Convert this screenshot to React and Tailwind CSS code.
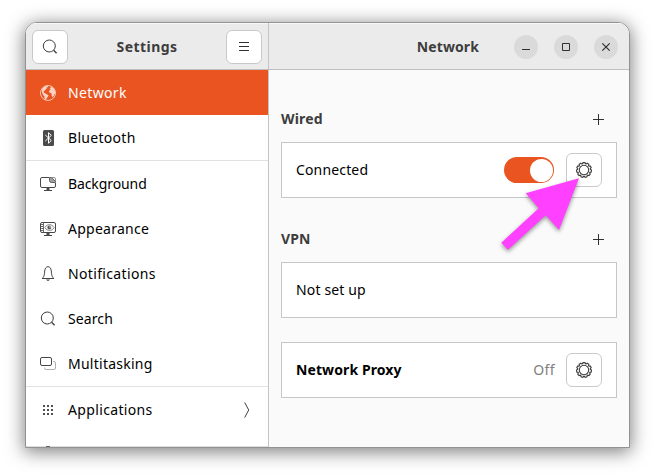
import React from "react";

function Globe() {
  return (
    <svg width="16" height="16" viewBox="0 0 16 16" className="text-[#fad3c5]">
      <circle cx="8" cy="8" r="7.500" fill="none" stroke="currentColor" strokeWidth=".9" />
      <path d="M1.800 4.500 3.300 2.200 5.500 1l2.300-.2.200 1.200-1.600.8.300 1-1.600 1.200-1.200 1.300-.2 1.500 1.500.2.600 1 1.700.4 1 1-.7 1.700-1.100.9-.5 1.800-.7.300-1-1.700-.2-2.100-1.200-1.300-.9-2.300z" fill="currentColor" />
      <path d="m9.500 3.600 1.300-.6-.3-1.200 1.300-.1 2 1.700 1.400 2.600.1 2.600-1 .6-.5 1.800-1.300 1-.7-.6-.1-2.100-.6-1.200-1.500-.4-.7-1.400.9-1.400 1.200-.2z" fill="currentColor" />
    </svg>
  );
}

function BluetoothIcon() {
  return (
    <svg width="16" height="16" viewBox="0 0 16 16">
      <rect x="3" y="0" width="11" height="16" rx="1.500" fill="#4b4b4b" />
      <path d="m5.300 5 6 5.500-2.800 2.700V2.700l2.800 2.700-6 5.600" fill="none" stroke="#fff" strokeWidth="1" />
    </svg>
  );
}

function BackgroundIcon() {
  return (
    <svg width="16" height="16" viewBox="0 0 16 16">
      <path d="M9 1.500H2A1.500 1.500 0 0 0 .5 3v7A1.500 1.500 0 0 0 2 11.500h12A1.500 1.500 0 0 0 15.500 10V7" fill="none" stroke="#484848" />
      <path d="M9.500 1.500h2L15.500 5.500v1h-4a2 2 0 0 1-2-2z" fill="#a0a0a0" stroke="#555" strokeWidth=".9" />
      <path d="M12 1.500h2A1.500 1.500 0 0 1 15.500 3v2" fill="none" stroke="#888" strokeWidth=".9" />
      <path d="M6.500 12h3v2h-3zM4 14h8v1H4z" fill="#484848" />
    </svg>
  );
}

function AppearanceIcon() {
  return (
    <svg width="16" height="16" viewBox="0 0 16 16">
      <rect x=".5" y="1.500" width="15" height="10" rx="1.500" fill="none" stroke="#484848" />
      <path d="M3.500 1.500v10M1 3.500h2M1 5.500h2M1 7.500h2M1 9.500h2" stroke="#5a5a5a" strokeWidth=".9" />
      <path d="M4.800 6.600C6.300 4.200 8 3.600 9.500 3.600s3.200.8 4.700 3c-1.500 2.200-3.200 2.900-4.700 2.900s-3.200-.7-4.700-2.900z" fill="none" stroke="#777" strokeWidth=".9" />
      <circle cx="9.300" cy="6.500" r="1.900" fill="#555" />
      <circle cx="10" cy="6" r=".7" fill="#fff" />
      <path d="M6.500 12h3v2h-3zM4 14h8v1H4z" fill="#484848" />
    </svg>
  );
}

function Bell() {
  return (
    <svg width="16" height="16" viewBox="0 0 16 16" fill="none" stroke="#454545">
      <path d="M2.500 12c1-1 1.700-2 2-4.500l.2-2.500C5 2.500 6 .7 8 .7S11 2.500 11.300 5l.2 2.500c.300 2.500 1 3.500 2 4.500" strokeWidth="1" />
      <path d="M2 12.500h12" strokeWidth="1" />
      <path d="M6 13.500h4l-1.200 1.300H7.200z" fill="#454545" stroke="none" />
    </svg>
  );
}

function Magnifier() {
  return (
    <svg width="16" height="16" viewBox="0 0 16 16" fill="none" stroke="#3d3d3d">
      <circle cx="7.300" cy="7" r="6" strokeWidth="1" />
      <path d="m11.600 11.300 3 3" strokeWidth="1.300" />
    </svg>
  );
}

function Multitask() {
  return (
    <svg width="16" height="16" viewBox="0 0 16 16" fill="none">
      <path d="M13 5.500h1A1.500 1.500 0 0 1 15.500 7v5a1.500 1.500 0 0 1-1.500 1.500H6A1.500 1.500 0 0 1 4.500 12v-.5" stroke="#b0b0b0" />
      <rect x=".5" y="1.500" width="11" height="8" rx="1.500" stroke="#454545" />
    </svg>
  );
}

function Dots() {
  return (
    <svg width="16" height="16" viewBox="0 0 16 16" fill="#505050">
      {[3, 7, 11].map((y) => [3, 7, 11].map((x) => <rect key={x + "-" + y} x={x} y={y} width="2" height="2" />))}
    </svg>
  );
}

const TEETH = 11;

function gearOutline() {
  const points = [];
  for (let i = 0; i < TEETH; i++) {
    const at = (offset, r) => {
      const a = ((i + offset) / TEETH) * Math.PI * 2 - Math.PI / 2;
      return (Math.cos(a) * r).toFixed(2) + " " + (Math.sin(a) * r).toFixed(2);
    };
    points.push(at(-0.4, 6.4), at(-0.22, 7.5), at(0.22, 7.5), at(0.4, 6.4));
  }
  return "M" + points.join("L") + "Z";
}

function Gear() {
  return (
    <svg width="18" height="18" viewBox="-9 -9 18 18" fill="none" stroke="#3d3d3d">
      <path d={gearOutline()} strokeWidth="1.150" />
      <circle r="4.700" strokeWidth="1.050" />
    </svg>
  );
}

function Plus() {
  return (
    <svg width="11" height="11" viewBox="0 0 11 11" stroke="#303030">
      <path d="M0 5.500h11M5.500 0v11" />
    </svg>
  );
}

function SquareButton({ children }) {
  return (
    <button className="flex h-[34px] w-9 shrink-0 items-center justify-center rounded-md border border-[#c9c9c9] bg-white">
      {children}
    </button>
  );
}

const groups = [
  [
    { label: "Network", icon: Globe, active: true, spacing: "tracking-[0.35px]" },
    { label: "Bluetooth", icon: BluetoothIcon, spacing: "tracking-[0.3px]" },
  ],
  [
    { label: "Background", icon: BackgroundIcon, spacing: "tracking-[-0.1px]" },
    { label: "Appearance", icon: AppearanceIcon, spacing: "tracking-[0.25px]" },
    { label: "Notifications", icon: Bell, spacing: "tracking-[0.35px]" },
    { label: "Search", icon: Magnifier, spacing: "tracking-[0.1px]" },
    { label: "Multitasking", icon: Multitask, spacing: "tracking-[0.25px]" },
  ],
  [{ label: "Applications", icon: Dots, chevron: true, spacing: "tracking-[0.35px]" }],
];

function NavRow({ item }) {
  const Icon = item.icon;
  return (
    <div className={"flex h-[45px] shrink-0 items-center pl-3.5 pr-[18px] " + (item.active ? "bg-[#e95420] text-white" : "text-black")}>
      <Icon />
      <span className={"ml-3 flex-1 " + item.spacing}>{item.label}</span>
      {item.chevron && (
        <svg width="6" height="16" viewBox="0 0 6 16" fill="none" stroke="#3d3d3d">
          <path d="m.7.500 4 7.500-4 7.500" />
        </svg>
      )}
    </div>
  );
}

function WindowButton({ children }) {
  return (
    <button className="flex size-6 items-center justify-center rounded-full bg-[#dadada]">
      <svg width="10" height="10" viewBox="0 0 10 10" fill="none" stroke="#303030">
        {children}
      </svg>
    </button>
  );
}

function SectionTitle({ title }) {
  return (
    <div className="flex h-5 items-center justify-between pr-[13px] font-bold text-[#3d3d3d]">
      <h2 className="tracking-[0.15px]">{title}</h2>
      <Plus />
    </div>
  );
}

function Card({ children }) {
  return <div className="flex h-14 items-center border border-[#c6c6c6] bg-white pl-3.5 pr-3.5 text-black">{children}</div>;
}

export default function App() {
  return (
    <div className="relative h-[476px] w-[655px] overflow-hidden bg-white pl-[25px] pt-[22px] font-['Noto_Sans',sans-serif] text-[14px] leading-5">
      <div className="flex h-[426px] w-[605px] overflow-hidden rounded-t-xl border border-[#929292] bg-[#fafafa] shadow-[0_3px_18px_1px_rgba(0,0,0,0.5)]">
        <aside className="flex w-[243px] shrink-0 flex-col overflow-hidden border-r border-[#c4c4c4] bg-white">
          <header className="flex h-[47px] shrink-0 items-center justify-between border-b border-t border-b-[#bfbfbf] border-t-[#f8f8f8] bg-[#ebebeb] px-1.5 font-bold text-[#3d3d3d]">
            <SquareButton>
              <Magnifier />
            </SquareButton>
            <h1 className="tracking-[0.45px]">Settings</h1>
            <SquareButton>
              <svg width="10" height="10" viewBox="0 0 10 10" stroke="#303030">
                <path d="M0 .5h10M0 4.500h10M0 8.500h10" />
              </svg>
            </SquareButton>
          </header>
          <nav className="flex flex-col divide-y divide-[#e1e1e1]">
            {groups.map((group, i) => (
              <div key={i} className="flex flex-col">
                {group.map((item) => (
                  <NavRow key={item.label} item={item} />
                ))}
              </div>
            ))}
          </nav>
          <div className="mt-auto flex h-px shrink-0 bg-[#dddddd] pl-5">
            <span className="h-px w-1 bg-[#666666]" />
          </div>
        </aside>
        <main className="flex flex-1 flex-col">
          <header className="flex h-[47px] shrink-0 items-center justify-end border-b border-t border-b-[#bfbfbf] border-t-[#f8f8f8] bg-[#ebebeb] pr-[11px] font-bold text-[#3d3d3d]">
            <h1 className="mr-[35px] tracking-[0.1px]">Network</h1>
            <div className="flex gap-4">
              <WindowButton>
                <path d="M1 7.500h8" />
              </WindowButton>
              <WindowButton>
                <path d="M1.500 1.500h7v7h-7z" />
              </WindowButton>
              <WindowButton>
                <path d="m1.300 1.300 7.400 7.400m0-7.400L1.300 8.700" strokeWidth="1.200" />
              </WindowButton>
            </div>
          </header>
          <div className="flex flex-col pl-3 pr-3 pt-[39px]">
            <SectionTitle title="Wired" />
            <div className="mt-[13px]">
              <Card>
                <span className="flex-1 tracking-[0.15px]">Connected</span>
                <div className="mr-3 flex h-[26px] w-[50px] items-center justify-end rounded-full bg-[#e95420] pr-px">
                  <span className="size-[23px] rounded-full bg-white" />
                </div>
                <SquareButton>
                  <Gear />
                </SquareButton>
              </Card>
            </div>
            <div className="mt-[31px]">
              <SectionTitle title="VPN" />
            </div>
            <div className="mt-[13px]">
              <Card>
                <span className="tracking-[0.15px]">Not set up</span>
              </Card>
            </div>
            <div className="mt-6">
              <Card>
                <span className="flex-1 font-bold tracking-[0.1px]">Network Proxy</span>
                <span className="mr-[11px] tracking-[0.4px] text-[#808080]">Off</span>
                <SquareButton>
                  <Gear />
                </SquareButton>
              </Card>
            </div>
          </div>
        </main>
      </div>
      <svg className="absolute left-[490px] top-[170px] drop-shadow-[0_2px_2px_rgba(0,0,0,0.4)]" width="100" height="90" viewBox="490 170 100 90">
        <path d="m579 178.300-53.300 15 13 15-37.400 34.400 6.700 7 37.700-34.400 13.300 14.700z" fill="#ff40ff" />
      </svg>
    </div>
  );
}
